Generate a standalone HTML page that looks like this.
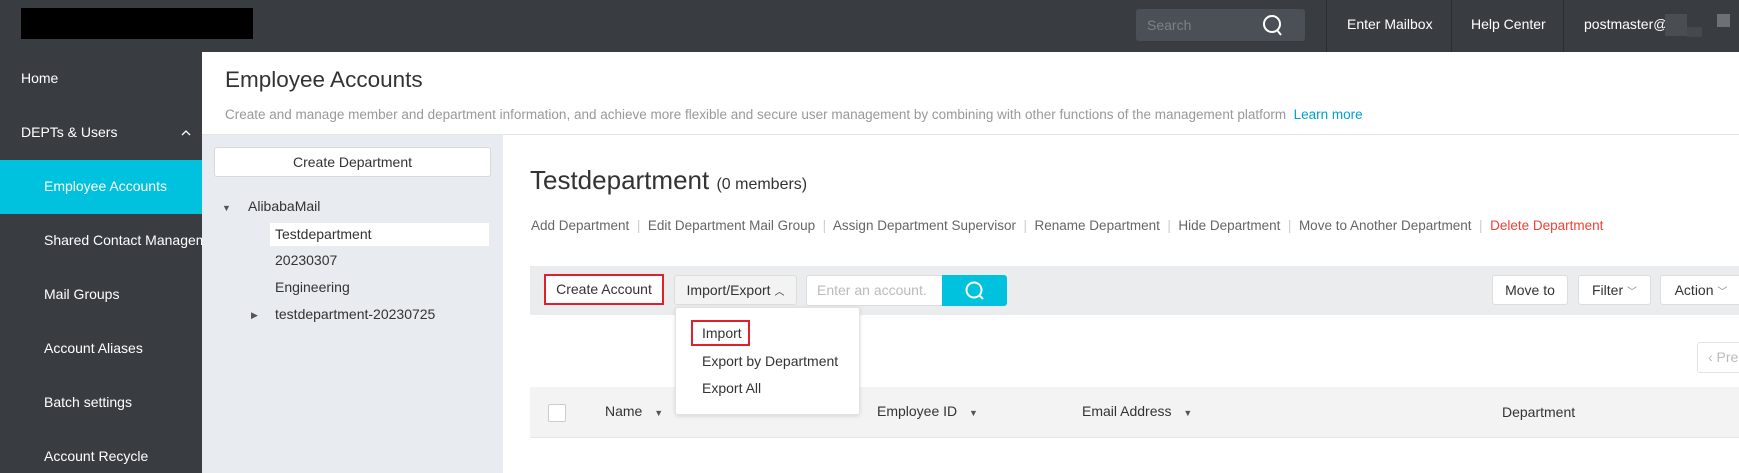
<!DOCTYPE html>
<html><head><meta charset="utf-8"><style>
*{box-sizing:border-box;margin:0;padding:0}
body{width:1739px;height:473px;overflow:hidden;position:relative;font-family:"Liberation Sans",Arial,sans-serif;font-size:14px;color:#333;background:#fff}
.a{position:absolute;white-space:nowrap}
.hdr{left:0;top:0;width:1739px;height:52px;background:#393d42}
.side{left:0;top:52px;width:202px;height:421px;background:#393d42}
.si{color:#fff;font-size:14px}
.sep{width:1px;height:52px;top:0;background:#2a2d31}
.lnk{color:#666;font-size:13.5px}
.bar{color:#ccc}
.btn{background:#fff;border:1px solid #ddd;border-radius:3px;text-align:center;line-height:29px;color:#333}
.hd{color:#333;font-size:14px}
.tri{font-size:9px;color:#555}
</style></head><body>
<div class="a hdr"></div>
<div class="a" style="left:21px;top:8px;width:232px;height:31px;background:#000"></div>
<div class="a" style="left:1136px;top:9px;width:169px;height:32px;background:#4b5056;border-radius:3px"></div>
<div class="a" style="left:1147px;top:17px;color:#7c8187;font-size:14px">Search</div>
<svg class="a" style="left:1262px;top:14px" width="22" height="24" viewBox="0 0 22 24"><circle cx="10" cy="10" r="8" fill="none" stroke="#fff" stroke-width="2"/><path d="M15 16 L19 21" stroke="#fff" stroke-width="2"/></svg>
<div class="a sep" style="left:1326px"></div>
<div class="a sep" style="left:1451px"></div>
<div class="a sep" style="left:1563px"></div>
<div class="a si" style="left:1347px;top:16px">Enter Mailbox</div>
<div class="a si" style="left:1471px;top:16px">Help Center</div>
<div class="a si" style="left:1584px;top:16px">postmaster@</div>
<div class="a" style="left:1665px;top:14px;width:22px;height:22px;background:#4a4e53"></div>
<div class="a" style="left:1687px;top:27px;width:15px;height:10px;background:#45494e"></div>
<div class="a" style="left:1717px;top:14px;width:13px;height:13px;background:#6d7176"></div>

<div class="a side"></div>
<div class="a si" style="left:21px;top:70px">Home</div>
<div class="a si" style="left:21px;top:124px">DEPTs &amp; Users</div>
<svg class="a" style="left:180px;top:128px" width="12" height="10"><path d="M2 7 L6 3 L10 7" fill="none" stroke="#fff" stroke-width="1.3"/></svg>
<div class="a" style="left:0;top:160px;width:202px;height:54px;background:#00c1de"></div>
<div class="a si" style="left:44px;top:178px">Employee Accounts</div>
<div class="a si" style="left:44px;top:232px;width:158px;overflow:hidden">Shared Contact Management</div>
<div class="a si" style="left:44px;top:286px">Mail Groups</div>
<div class="a si" style="left:44px;top:340px">Account Aliases</div>
<div class="a si" style="left:44px;top:394px">Batch settings</div>
<div class="a si" style="left:44px;top:448px">Account Recycle</div>

<div class="a" style="left:225px;top:67px;font-size:22.5px;color:#333">Employee Accounts</div>
<div class="a" style="left:225px;top:107px;font-size:13.5px;color:#999">Create and manage member and department information, and achieve more flexible and secure user management by combining with other functions of the management platform &nbsp;<span style="color:#00a2ca">Learn more</span></div>
<div class="a" style="left:202px;top:134px;width:1537px;height:1px;background:#e6e6e6"></div>

<div class="a" style="left:202px;top:135px;width:301px;height:338px;background:#e8ebef"></div>
<div class="a btn" style="left:214px;top:147px;width:277px;height:30px;border-color:#d8d8d8">Create Department</div>
<div class="a tri" style="left:222px;top:203px">▼</div>
<div class="a" style="left:248px;top:198px">AlibabaMail</div>
<div class="a" style="left:270px;top:223px;width:219px;height:23px;background:#fff"></div>
<div class="a" style="left:275px;top:226px">Testdepartment</div>
<div class="a" style="left:275px;top:252px">20230307</div>
<div class="a" style="left:275px;top:279px">Engineering</div>
<div class="a tri" style="left:251px;top:310px">▶</div>
<div class="a" style="left:275px;top:306px">testdepartment-20230725</div>

<div class="a" style="left:530px;top:165px;font-size:26px;color:#333">Testdepartment <span style="font-size:16px">(0 members)</span></div>
<div class="a lnk" style="left:531px;top:218px">Add Department <span class="bar">&nbsp;|&nbsp;</span> Edit Department Mail Group <span class="bar">&nbsp;|&nbsp;</span> Assign Department Supervisor <span class="bar">&nbsp;|&nbsp;</span> Rename Department <span class="bar">&nbsp;|&nbsp;</span> Hide Department <span class="bar">&nbsp;|&nbsp;</span> Move to Another Department <span class="bar">&nbsp;|&nbsp;</span> <span style="color:#f04134">Delete Department</span></div>

<div class="a" style="left:530px;top:266px;width:1209px;height:49px;background:#ebeced"></div>
<div class="a btn" style="left:544px;top:274px;width:120px;height:31px;border:2px solid #e0202a;border-radius:0;line-height:27px">Create Account</div>
<div class="a btn" style="left:674px;top:275px;width:123px;height:30px;background:#f3f3f3">Import/Export <span style="font-size:10px">︿</span></div>
<div class="a" style="left:806px;top:275px;width:200px;height:31px;background:#fff;border:1px solid #ddd;border-radius:3px"></div>
<div class="a" style="left:817px;top:282px;color:#bbb">Enter an account.</div>
<div class="a" style="left:942px;top:275px;width:65px;height:31px;background:#00c1de;border-radius:0 3px 3px 0"></div>
<svg class="a" style="left:964px;top:280px" width="22" height="22"><circle cx="10" cy="10" r="7.5" fill="none" stroke="#fff" stroke-width="2"/><path d="M15 15 L19 19" stroke="#fff" stroke-width="2"/></svg>
<div class="a btn" style="left:1492px;top:275px;width:76px;height:30px">Move to</div>
<div class="a btn" style="left:1578px;top:275px;width:73px;height:30px">Filter <span style="font-size:10px;color:#888">﹀</span></div>
<div class="a btn" style="left:1660px;top:275px;width:82px;height:30px">Action <span style="font-size:10px;color:#888">﹀</span></div>

<div class="a" style="left:1697px;top:342px;width:50px;height:31px;border:1px solid #e3e3e3;border-radius:3px;color:#bbb;line-height:29px;padding-left:10px">‹ Pre</div>

<div class="a" style="left:530px;top:387px;width:1209px;height:51px;background:#f3f3f3;border-bottom:1px solid #e6e6e6"></div>
<div class="a" style="left:548px;top:404px;width:18px;height:18px;background:#fff;border:1px solid #ccc;border-radius:2px"></div>
<div class="a hd" style="left:605px;top:403px">Name <span class="tri" style="margin-left:8px">▼</span></div>
<div class="a hd" style="left:877px;top:403px">Employee ID <span class="tri" style="margin-left:8px">▼</span></div>
<div class="a hd" style="left:1082px;top:403px">Email Address <span class="tri" style="margin-left:8px">▼</span></div>
<div class="a hd" style="left:1502px;top:404px">Department</div>

<div class="a" style="left:675px;top:307px;width:185px;height:108px;background:#fff;border:1px solid #e3e3e3;border-radius:3px;box-shadow:0 1px 4px rgba(0,0,0,.12)"></div>
<div class="a" style="left:691px;top:320px;width:59px;height:26px;border:2px solid #e0202a"></div>
<div class="a" style="left:702px;top:325px">Import</div>
<div class="a" style="left:702px;top:353px">Export by Department</div>
<div class="a" style="left:702px;top:380px">Export All</div>
</body></html>
